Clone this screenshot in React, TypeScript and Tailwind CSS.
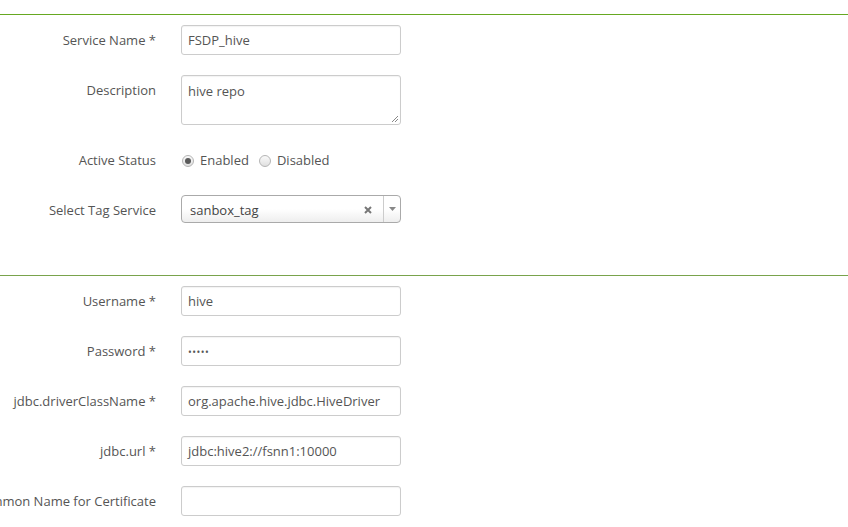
import React from "react";

const font = { fontFamily: '"Open Sans", "Liberation Sans", sans-serif' };

function Row({ label, children, h = "h-[30px]" }: { label: string; children: React.ReactNode; h?: string }) {
  return (
    <div className="flex items-start">
      <div className="w-[156px] shrink-0 h-[30px] pt-[2px] flex items-center justify-end whitespace-nowrap text-[13px] text-[#555]">
        <span>{label}</span>
      </div>
      <div className={`ml-[25px] ${h}`}>{children}</div>
    </div>
  );
}

function Input({ value, password }: { value: string; password?: boolean }) {
  return (
    <div className="w-[220px] h-[30px] border border-[#ccc] rounded-[3px] bg-white px-[6px] pt-[2px] flex items-center text-[13px] text-[#555] shadow-[inset_0_1px_1px_rgba(0,0,0,0.05)]">
      {password ? <span className="text-[10px] tracking-[0.5px] text-[#555]">•••••</span> : value}
    </div>
  );
}

function Radio({ checked, label }: { checked?: boolean; label: string }) {
  return (
    <div className="flex items-center">
      <span className="w-[12px] h-[12px] rounded-full border border-[#b5b5b5] bg-gradient-to-b from-[#fafafa] to-[#e0e0e0] flex items-center justify-center">
        {checked && <span className="w-[6px] h-[6px] rounded-full bg-[#5a5a5a]" />}
      </span>
      <span className="ml-[6px] text-[13px] text-[#555]">{label}</span>
    </div>
  );
}

export default function App() {
  return (
    <div className="w-[848px] h-[527px] bg-white overflow-hidden" style={font}>
      <div className="h-[14px]" />
      <div className="border-t border-[#66a821]" />
      <div className="pt-[10px] flex flex-col gap-[20px]">
        <Row label="Service Name *">
          <Input value="FSDP_hive" />
        </Row>
        <Row label="Description" h="h-[50px]">
          <div className="relative w-[220px] h-[50px] border border-[#ccc] rounded-[3px] px-[6px] pt-[6px] text-[13px] text-[#555] shadow-[inset_0_1px_1px_rgba(0,0,0,0.05)]">
            hive repo
            <svg className="absolute right-[1px] bottom-[1px]" width="8" height="8" viewBox="0 0 8 8">
              <line x1="7" y1="1" x2="1" y2="7" stroke="#888" strokeWidth="1" />
              <line x1="7" y1="4" x2="4" y2="7" stroke="#888" strokeWidth="1" />
            </svg>
          </div>
        </Row>
        <Row label="Active Status">
          <div className="h-[30px] pt-[2px] flex items-center gap-[10px] pl-[1px]">
            <Radio checked label="Enabled" />
            <Radio label="Disabled" />
          </div>
        </Row>
        <Row label="Select Tag Service">
          <div className="w-[220px] h-[28px] border border-[#aaa] rounded-[4px] bg-gradient-to-b from-white from-50% to-[#eee] flex items-center text-[13px] text-[#444]">
            <span className="flex-1 pl-[8px] pt-[3px]">sanbox_tag</span>
            <span className="w-[10px] mr-[10px] pt-[2px] flex items-center justify-center">
              <svg width="8" height="8" viewBox="0 0 8 8">
                <path d="M1 1 L7 7 M7 1 L1 7" stroke="#777" strokeWidth="2" />
              </svg>
            </span>
            <span className="w-[17px] h-full border-l border-[#ccc] flex items-center justify-center">
              <svg width="7" height="5" viewBox="0 0 7 5">
                <path d="M0 0 L7 0 L3.5 4 Z" fill="#888" />
              </svg>
            </span>
          </div>
        </Row>
      </div>
      <div className="h-[50px]" />
      <div className="border-t border-[#79a34c]" />
      <div className="pt-[10px] flex flex-col gap-[20px]">
        <Row label="Username *">
          <Input value="hive" />
        </Row>
        <Row label="Password *">
          <Input value="" password />
        </Row>
        <Row label="jdbc.driverClassName *">
          <Input value="org.apache.hive.jdbc.HiveDriver" />
        </Row>
        <Row label="jdbc.url *">
          <Input value="jdbc:hive2://fsnn1:10000" />
        </Row>
        <Row label="Common Name for Certificate">
          <Input value="" />
        </Row>
      </div>
    </div>
  );
}
